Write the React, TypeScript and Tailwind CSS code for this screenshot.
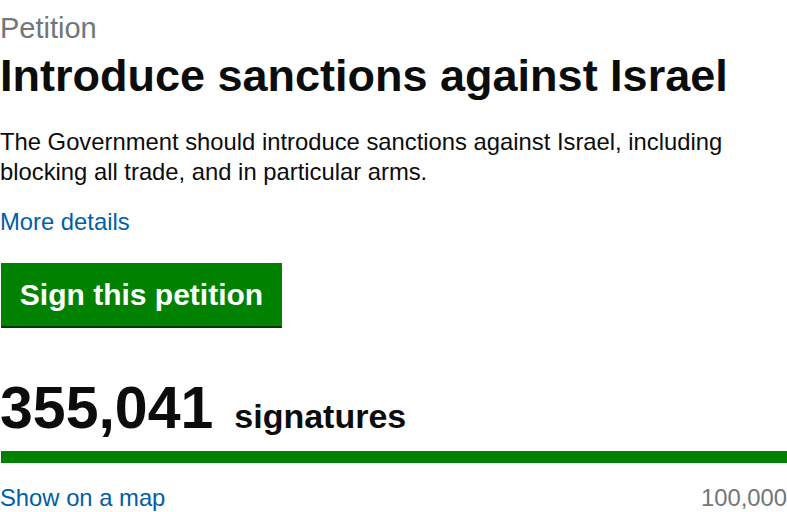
import React from 'react'

const font = { fontFamily: '"Liberation Sans", Arial, Helvetica, sans-serif' }

export default function App() {
  return (
    <div className="w-[787px] h-[512px] overflow-hidden bg-white text-[#0b0c0c]" style={font}>
      <div className="pt-[11px]">
        {/* Caption + title */}
        <p className="text-[29px] leading-[34px] text-[#6f777b]">Petition</p>
        <h1 className="mt-[6px] text-[45px] leading-[50px] font-bold">Introduce sanctions against Israel</h1>

        <p className="mt-[26px] text-[23.8px] leading-[30px]">
          The Government should introduce sanctions against Israel, including blocking all trade, and in particular arms.
        </p>

        <a href="#" className="mt-[20px] block w-fit text-[23.8px] leading-[30px] text-[#005ea5]">
          More details
        </a>

        {/* Sign button */}
        <button className="mt-[26px] ml-px flex h-[63px] w-[281px] items-center justify-center bg-[#008200] text-[30px] font-bold leading-[30px] text-white shadow-[0_2px_0_#003a00]">
          Sign this petition
        </button>

        {/* Signature count */}
        <div className="mt-[52px] flex items-baseline">
          <span className="text-[59px] font-bold leading-[60px]">355,041</span>
          <span className="ml-[21px] text-[34px] font-bold leading-[40px]">signatures</span>
        </div>

        <div className="mt-[13px] ml-px h-[12px] bg-[#008200]" />

        <div className="mt-[20px] flex items-baseline justify-between text-[23.8px] leading-[30px]">
          <a href="#" className="text-[#005ea5]">Show on a map</a>
          <span className="text-[#6f777b]">100,000</span>
        </div>
      </div>
    </div>
  )
}
